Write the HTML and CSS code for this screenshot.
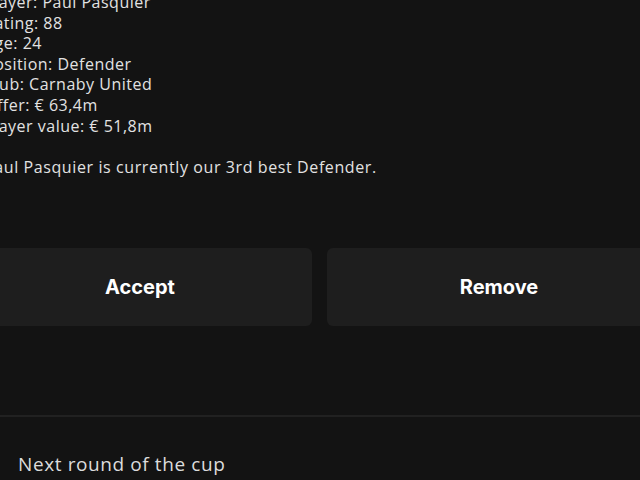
FILE: index.html
```html
<!DOCTYPE html>
<html>
<head>
    <title>Transfer Offer</title>
    <link rel="stylesheet" href="styles.css">
</head>
<body>
    <div class="screen">
        <div class="offer">
            <div class="details">
                <div class="line">Player: Paul Pasquier</div>
                <div class="line">Rating: 88</div>
                <div class="line">Age: 24</div>
                <div class="line">Position: Defender</div>
                <div class="line">Club: Carnaby United</div>
                <div class="line">Offer: € 63,4m</div>
                <div class="line">Player value: € 51,8m</div>
            </div>
            <p class="note">Paul Pasquier is currently our 3rd best Defender.</p>
        </div>

        <div class="actions">
            <button class="action">Accept</button>
            <button class="action">Remove</button>
        </div>

        <div class="divider"></div>

        <div class="menu">
            <div class="menu-item">Next round of the cup</div>
        </div>
    </div>
</body>
</html>
```

FILE: styles.css
```css
html, body {
    margin: 0;
    padding: 0;
    background-color: #131313;
    overflow: hidden;
}

body {
    width: 640px;
    height: 480px;
    font-family: "Open Sans", Lato, sans-serif;
    color: #e2e2e2;
}

.screen {
    width: 640px;
    height: 480px;
    overflow: hidden;
}

.offer {
    margin-left: -16px;
    margin-top: -8px;
}

.details {
    font-size: 16px;
    line-height: 20.6px;
    letter-spacing: 0.5px;
}

.note {
    font-size: 16px;
    line-height: 20px;
    letter-spacing: 0.6px;
    margin: 21px 0 0 0;
}

.actions {
    display: flex;
    gap: 15px;
    margin-left: -32px;
    width: 703px;
    margin-top: 71px;
}

.action {
    flex: 1;
    height: 78px;
    background-color: #1e1e1e;
    border: none;
    border-radius: 6px;
    color: #fff;
    font-family: Inter, "Liberation Sans", sans-serif;
    font-weight: bold;
    font-size: 20px;
}

.divider {
    height: 2px;
    background-color: #212121;
    margin-top: 89px;
}

.menu {
    padding: 35px 0 0 18px;
}

.menu-item {
    font-size: 19px;
    color: #dcdcdc;
    line-height: 24px;
    letter-spacing: 0.6px;
}
```
